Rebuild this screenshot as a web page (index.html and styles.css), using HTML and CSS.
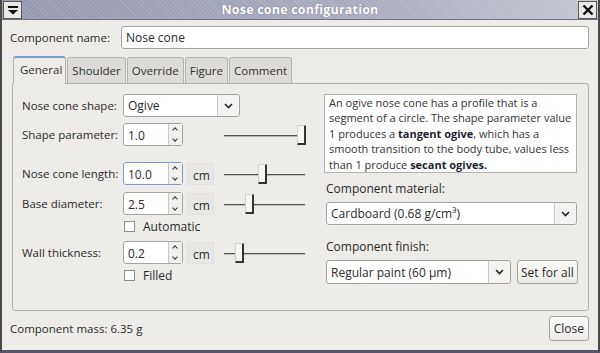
FILE: index.html
```html
<!DOCTYPE html>
<html lang="en">
<head>
  <meta charset="UTF-8">
  <title>Nose cone configuration</title>
  <link rel="stylesheet" href="styles.css">
</head>
<body>
  <div class="window">
    <!-- Title bar -->
    <div class="titlebar">
      <div class="tb-btn menu-btn">
        <svg width="12" height="10" viewBox="0 0 12 10"><rect x="1" y="1" width="10" height="2" fill="#111"/><path d="M1 5 H11 L6 9.5 Z" fill="#111"/></svg>
      </div>
      <div class="title">Nose cone configuration</div>
      <div class="tb-btn close-btn">
        <svg width="12" height="12" viewBox="0 0 12 12"><path d="M1.5 1.5 L10.5 10.5 M10.5 1.5 L1.5 10.5" stroke="#111" stroke-width="2.4"/></svg>
      </div>
    </div>

    <div class="content">
      <div class="name-row">
        <label>Component name:</label>
        <div class="text-input">Nose cone</div>
      </div>

      <div class="tabs">
        <div class="tab active">General</div>
        <div class="tab">Shoulder</div>
        <div class="tab">Override</div>
        <div class="tab">Figure</div>
        <div class="tab">Comment</div>
      </div>

      <div class="panel">
        <div class="left">
          <div class="row">
            <label>Nose cone shape:</label>
            <div class="combo shape-combo"><span>Ogive</span><div class="combo-arrow"><svg width="9" height="6" viewBox="0 0 9 6"><path d="M1 1 L4.5 4.5 L8 1" stroke="#222" stroke-width="1.6" fill="none"/></svg></div></div>
          </div>
          <div class="row">
            <label>Shape parameter:</label>
            <div class="spinner"><span>1.0</span><div class="spin-btns"><i class="up"></i><i class="down"></i></div></div>
            <div class="unit blank"></div>
            <div class="slider"><div class="thumb" style="left: 73px"></div></div>
          </div>
          <div class="row gap-top">
            <label>Nose cone length:</label>
            <div class="spinner focused"><span>10.0</span><div class="spin-btns"><i class="up"></i><i class="down"></i></div></div>
            <div class="unit">cm</div>
            <div class="slider"><div class="thumb" style="left: 34px"></div></div>
          </div>
          <div class="row">
            <label>Base diameter:</label>
            <div class="spinner"><span>2.5</span><div class="spin-btns"><i class="up"></i><i class="down"></i></div></div>
            <div class="unit">cm</div>
            <div class="slider"><div class="thumb" style="left: 21px"></div></div>
          </div>
          <div class="check-row"><span class="check"></span>Automatic</div>
          <div class="row">
            <label>Wall thickness:</label>
            <div class="spinner"><span>0.2</span><div class="spin-btns"><i class="up"></i><i class="down"></i></div></div>
            <div class="unit">cm</div>
            <div class="slider"><div class="thumb" style="left: 11px"></div></div>
          </div>
          <div class="check-row"><span class="check"></span>Filled</div>
        </div>

        <div class="right">
          <div class="desc">An ogive nose cone has a profile that is a segment of a circle. The shape parameter value 1 produces a <b>tangent ogive</b>, which has a smooth transition to the body tube, values less than 1 produce <b>secant ogives.</b></div>
          <div class="field-label first">Component material:</div>
          <div class="combo wide"><span>Cardboard (0.68 g/cm³)</span><div class="combo-arrow"><svg width="9" height="6" viewBox="0 0 9 6"><path d="M1 1 L4.5 4.5 L8 1" stroke="#222" stroke-width="1.6" fill="none"/></svg></div></div>
          <div class="field-label">Component finish:</div>
          <div class="finish-row">
            <div class="combo finish"><span>Regular paint (60 µm)</span><div class="combo-arrow"><svg width="9" height="6" viewBox="0 0 9 6"><path d="M1 1 L4.5 4.5 L8 1" stroke="#222" stroke-width="1.6" fill="none"/></svg></div></div>
            <button class="btn">Set for all</button>
          </div>
        </div>
      </div>

      <div class="footer">
        <span>Component mass: 6.35 g</span>
        <button class="btn close">Close</button>
      </div>
    </div>
  </div>
</body>
</html>
```

FILE: styles.css
```css
body {
  margin: 0;
  background: #fff;
  font-family: 'Open Sans', 'DejaVu Sans', sans-serif;
  font-size: 11.5px;
  color: #2b2b2b;
}

.window {
  width: 600px;
  height: 353px;
  box-sizing: border-box;
  background: #edece9;
  border: 2px solid #4a4a4a;
  border-top: none;
  border-bottom: 3px solid #56566a;
  display: flex;
  flex-direction: column;
  overflow: hidden;
}

/* Title bar */
.titlebar {
  height: 19px;
  display: flex;
  align-items: center;
  background:
    repeating-linear-gradient(45deg, rgba(255,255,255,0.12) 0 1px, rgba(0,0,0,0) 1px 3px),
    linear-gradient(90deg, #9598ae, #a9acbe 60%, #c4c6d2);
  border-bottom: 1px solid #6e7084;
}

.tb-btn {
  width: 19px;
  height: 18px;
  background: #e9e8e4;
  border: 1px solid #5a5a5a;
  box-sizing: border-box;
  display: flex;
  align-items: center;
  justify-content: center;
}

.menu-btn {
  margin-left: 1px;
}

.close-btn {
  margin-right: 1px;
}

.title {
  flex: 1;
  text-align: center;
  font-weight: 700;
  color: #fff;
  font-size: 12.5px;
  letter-spacing: 0.2px;
  text-shadow: 0 0 1px #5a5c70;
}

.content {
  flex: 1;
  display: flex;
  flex-direction: column;
  padding: 6px 8px 0 8px;
}

.name-row {
  display: flex;
  align-items: center;
  height: 23px;
}

.name-row label {
  width: 111px;
}

.text-input {
  flex: 1;
  height: 23px;
  box-sizing: border-box;
  background: #fff;
  border: 1px solid #a5a4a0;
  border-radius: 3px;
  padding: 2px 4px;
  margin-right: 1px;
  font-size: 12px;
}

/* Tabs */
.tabs {
  display: flex;
  margin-top: 7px;
  padding-left: 3px;
  height: 27px;
}

.tab {
  box-sizing: border-box;
  padding: 5px 4px 0 4px;
  background: #dcdbd7;
  border: 1px solid #b3b2ae;
  border-bottom: none;
  border-radius: 3px 3px 0 0;
  margin-right: 1px;
  color: #333;
  margin-top: 1px;
}

.tab.active {
  background: #edece9;
  border-top: 2px solid #7b9dd0;
  margin-top: 0;
  padding-top: 4px;
  height: 28px;
  position: relative;
  z-index: 1;
  padding-left: 6px;
  padding-right: 3px;
}

.panel {
  height: 228px;
  box-sizing: border-box;
  border: 1px solid #b3b2ae;
  border-radius: 0 3px 3px 3px;
  margin-left: 2px;
  margin-right: 1px;
  display: flex;
  padding: 10px 9px 0 9px;
}

.left {
  width: 284px;
  display: flex;
  flex-direction: column;
}

.row {
  display: flex;
  align-items: center;
  height: 23px;
  margin-bottom: 6px;
}

.row.gap-top {
  margin-top: 10px;
  margin-bottom: 7px;
}

.row label {
  width: 101px;
  flex: none;
}

.combo {
  height: 23px;
  box-sizing: border-box;
  border: 1px solid #a5a4a0;
  border-radius: 3px;
  background: #fff;
  display: flex;
  align-items: center;
  font-size: 12px;
}

.combo span {
  flex: 1;
  padding-left: 4px;
  white-space: nowrap;
}

.combo-arrow {
  width: 21px;
  height: 100%;
  border-left: 1px solid #c9c8c4;
  background: #f4f3f1;
  border-radius: 0 3px 3px 0;
  display: flex;
  align-items: center;
  justify-content: center;
}

.shape-combo {
  width: 117px;
}

.spinner {
  width: 60px;
  height: 23px;
  box-sizing: border-box;
  border: 1px solid #a5a4a0;
  border-radius: 3px;
  background: #fff;
  display: flex;
  flex: none;
  font-size: 12px;
}

.spinner.focused {
  border-color: #7b9dd0;
}

.spinner span {
  flex: 1;
  padding: 3px 0 0 4px;
}

.spin-btns {
  width: 13px;
  border-left: 1px solid #c9c8c4;
  background: #f1f0ee;
  display: flex;
  flex-direction: column;
}

.spin-btns i {
  flex: 1;
  position: relative;
}

.spin-btns i::after {
  content: "";
  position: absolute;
  left: 4px;
  width: 3px;
  height: 3px;
  border-left: 1.4px solid #333;
  border-top: 1.4px solid #333;
}

.spin-btns i.up::after {
  top: 4px;
  transform: rotate(45deg);
}

.spin-btns i.down::after {
  top: 2px;
  transform: rotate(225deg);
}

.unit {
  width: 27px;
  height: 22px;
  box-sizing: border-box;
  margin-left: 4px;
  background: #e8e7e4;
  border: 1px solid #e2e1dd;
  padding: 3px 0 0 5px;
  flex: none;
  font-size: 12px;
}

.unit.blank {
  visibility: hidden;
}

.slider {
  width: 81px;
  height: 20px;
  margin-left: 10px;
  position: relative;
  flex: none;
}

.slider::before {
  content: "";
  position: absolute;
  left: 0;
  right: 0;
  top: 10px;
  height: 1px;
  background: #555;
  box-shadow: 0 1px 0 #bbb;
}

.thumb {
  position: absolute;
  top: 0;
  width: 9px;
  height: 20px;
  box-sizing: border-box;
  background: #f7f6f4;
  border: 1px solid #d0cfcb;
  border-right: 2px solid #333;
  border-bottom: 2px solid #333;
  border-radius: 1px;
}

.check-row {
  display: flex;
  align-items: center;
  height: 14px;
  margin: -2px 0 8px 102px;
  font-size: 12px;
}

.check {
  width: 11px;
  height: 11px;
  box-sizing: border-box;
  border: 1px solid #8f8e8a;
  background: #fff;
  margin-right: 8px;
}

.right {
  flex: 1;
  margin-left: 18px;
  display: flex;
  flex-direction: column;
}

.desc {
  width: 253px;
  box-sizing: border-box;
  background: #fff;
  border: 1px solid #b3b2ae;
  padding: 0 4px 0 4px;
  font-size: 11px;
  line-height: 15.4px;
  color: #333;
}

.desc b {
  color: #1f1f30;
}

.field-label {
  line-height: 16px;
  margin-top: 14px;
  margin-bottom: 5px;
  padding-left: 2px;
  font-size: 12px;
}

.field-label.first {
  margin-top: 8px;
}

.combo.wide {
  width: 251px;
  margin-left: 2px;
}

.finish-row {
  display: flex;
  margin-left: 2px;
  gap: 6px;
}

.combo.finish {
  width: 185px;
  height: 24px;
}

.btn {
  font-family: inherit;
  font-size: 12px;
  color: #2b2b2b;
  background: linear-gradient(#fbfbfa, #ecebe8);
  border: 1px solid #a5a4a0;
  border-radius: 3px;
  padding: 0 3px;
  height: 24px;
}

.footer {
  display: flex;
  align-items: center;
  justify-content: space-between;
  margin-top: 5px;
  height: 25px;
}

.btn.close {
  height: 25px;
  padding: 0 4px;
  margin-right: 1px;
}
```
